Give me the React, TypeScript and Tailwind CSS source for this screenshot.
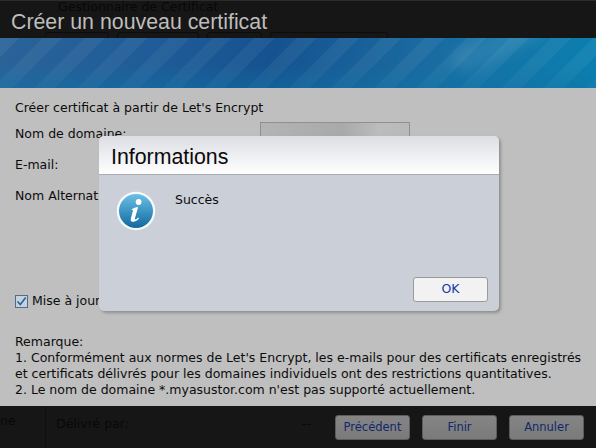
const font = "font-['DejaVu_Sans',sans-serif]";

const InfoIcon = () => (
  <svg width="40" height="40" viewBox="0 0 40 40" aria-hidden="true">
    <defs>
      <linearGradient id="info-bg" x1="0" y1="0" x2="0" y2="1">
        <stop offset="0" stopColor="#6cc0e6" />
        <stop offset="1" stopColor="#10689f" />
      </linearGradient>
    </defs>
    <circle cx="20" cy="20" r="19.3" fill="#f6f8fa" />
    <circle cx="20" cy="20" r="17" fill="url(#info-bg)" />
    <circle cx="22.6" cy="11" r="2.9" fill="#fff" />
    <path
      d="M15.5 18.4c2-1.6 4.2-2.4 6.6-2.5l-3.2 11.6c-.2.9.4 1.1 1 .8.8-.4 1.7-1.1 2.5-1.9l.7.8c-1.6 2-3.7 3.4-6 3.5-2 .1-2.8-1-2.3-2.9l2.2-8.3c.1-.6-.4-.7-1-.4l-.5-.7z"
      fill="#fff"
    />
  </svg>
);

const FooterButton = ({ label }: { label: string }) => (
  <button className="h-[25px] w-[75px] rounded-[3px] border border-[#5c5c5c] bg-[linear-gradient(#858585,#7a7a7a)] pt-[1px] text-[11.5px] text-[#11286b]">
    {label}
  </button>
);

export default function App() {
  return (
    <div className={`relative flex h-[448px] w-[596px] flex-col overflow-hidden bg-[#bfbfbf] ${font}`}>
      <header className="relative h-[38px] shrink-0 border-t border-[#2b2b2b] bg-[#161616]">
        <div className="absolute left-[58px] top-[-1px] text-[12.5px] leading-[14px] text-[#080808]">
          Gestionnaire de Certificat
        </div>
        <div className="absolute left-[45px] top-[31px] h-[7px] w-[64px] rounded-t-[3px] border border-[#0c0c0c]" />
        <div className="absolute left-[117px] top-[31px] h-[7px] w-[82px] rounded-t-[3px] border border-[#0c0c0c]" />
        <div className="absolute left-[207px] top-[31px] h-[7px] w-[55px] rounded-t-[3px] border border-[#0c0c0c]" />
        <div className="absolute left-[270px] top-[31px] h-[7px] w-[118px] rounded-t-[3px] border border-[#0c0c0c]" />
        <h1 className="relative pl-[11px] pt-[3px] font-['Liberation_Sans',sans-serif] text-[21.33px] leading-[36px] text-[#bdbdbd]">
          Créer un nouveau certificat
        </h1>
      </header>

      <div className="relative h-[50px] shrink-0 overflow-hidden bg-[linear-gradient(100deg,#2a6398_0%,#1f5c98_25%,#15528f_45%,#1a6aa0_70%,#0a80b0_100%)]">
        <div className="absolute inset-0 bg-[repeating-linear-gradient(135deg,rgba(255,255,255,0.05)_0px,rgba(255,255,255,0.05)_14px,rgba(255,255,255,0)_14px,rgba(255,255,255,0)_30px)]" />
        <div className="absolute inset-x-0 bottom-0 h-[24px] bg-[linear-gradient(rgba(20,120,175,0),rgba(15,115,165,0.45))]" />
        <div className="absolute left-[450px] top-[-6px] h-[24px] w-[100px] -rotate-[24deg] rounded-full bg-[rgba(140,190,210,0.16)] blur-[6px]" />
      </div>

      <main className="h-[318px] shrink-0 pl-[15px] pr-[12px] pt-[12px] text-[12.5px] leading-[16px] text-[#0c0c0c]">
        <p>Créer certificat à partir de Let's Encrypt</p>
        <div className="mt-[5px] flex h-[26px] items-center">
          <span className="w-[245px]">Nom de domaine:</span>
          <div className="mt-[3px] h-[27px] w-[150px] border border-[#8f8f96] bg-[linear-gradient(90deg,#b4b4b4,#a9a9a9_55%,#bcbcbc_80%,#b9b9b9)]" />
        </div>
        <p className="mt-[10px]">E-mail:</p>
        <p className="mt-[15px]">Nom Alternatif du sujet:</p>
        <label className="mt-[89px] flex items-center gap-[4px]">
          <span className="flex h-[13px] w-[13px] items-center justify-center border border-[#4c6c90] bg-[#c9d0d8]">
            <svg width="11" height="11" viewBox="0 0 11 11" aria-hidden="true">
              <path d="M1.5 5.5l2.8 3 5.4-7" fill="none" stroke="#1f66a8" strokeWidth="1.6" />
            </svg>
          </span>
          <span>Mise à jour automatique</span>
        </label>
        <div className="mt-[25px]">
          <p>Remarque:</p>
          <p>
            1. Conformément aux normes de Let's Encrypt, les e-mails pour des certificats enregistrés
            et certificats délivrés pour les domaines individuels ont des restrictions quantitatives.
          </p>
          <p>2. Le nom de domaine *.myasustor.com n'est pas supporté actuellement.</p>
        </div>
      </main>

      <footer className="relative flex h-[42px] shrink-0 items-start justify-end gap-[12px] bg-[#161616] pr-[12px] pt-[9px]">
        <div className="absolute left-0 top-[8px] text-[12.5px] leading-[14px] text-[#080808]">ne</div>
        <div className="absolute inset-y-0 left-[45px] w-px bg-[#0e0e0e]" />
        <div className="absolute left-[56px] top-[11px] text-[12.5px] leading-[14px] text-[#080808]">Délivré par:</div>
        <div className="absolute left-[302px] top-[11px] text-[12.5px] leading-[14px] text-[#080808]">--</div>
        <FooterButton label="Précédent" />
        <FooterButton label="Finir" />
        <FooterButton label="Annuler" />
      </footer>

      <div className="absolute left-[99px] top-[136px] flex h-[175px] w-[400px] flex-col overflow-hidden rounded-[5px] bg-[#cbcfd8] shadow-[2px_2px_3px_rgba(0,0,0,0.25)]">
        <div className="h-[39px] shrink-0 border-b border-[#a9acb2] bg-[linear-gradient(#dcdee4,#ffffff)] pl-[12px] font-['Liberation_Sans',sans-serif] text-[21.33px] leading-[42px] text-[#0a0a0a]">
          Informations
        </div>
        <div className="flex flex-1 pl-[17px] pt-[16px]">
          <InfoIcon />
          <p className="pl-[19px] pt-[1px] text-[12.5px] leading-[16px] text-[#0c0c0c]">Succès</p>
        </div>
        <div className="flex justify-end pb-[9px] pr-[11px]">
          <button className="h-[25px] w-[75px] rounded-[3px] border border-[#9a9a9a] bg-[#f2f2f3] text-[12.5px] text-[#1138a8]">
            OK
          </button>
        </div>
      </div>
    </div>
  );
}
